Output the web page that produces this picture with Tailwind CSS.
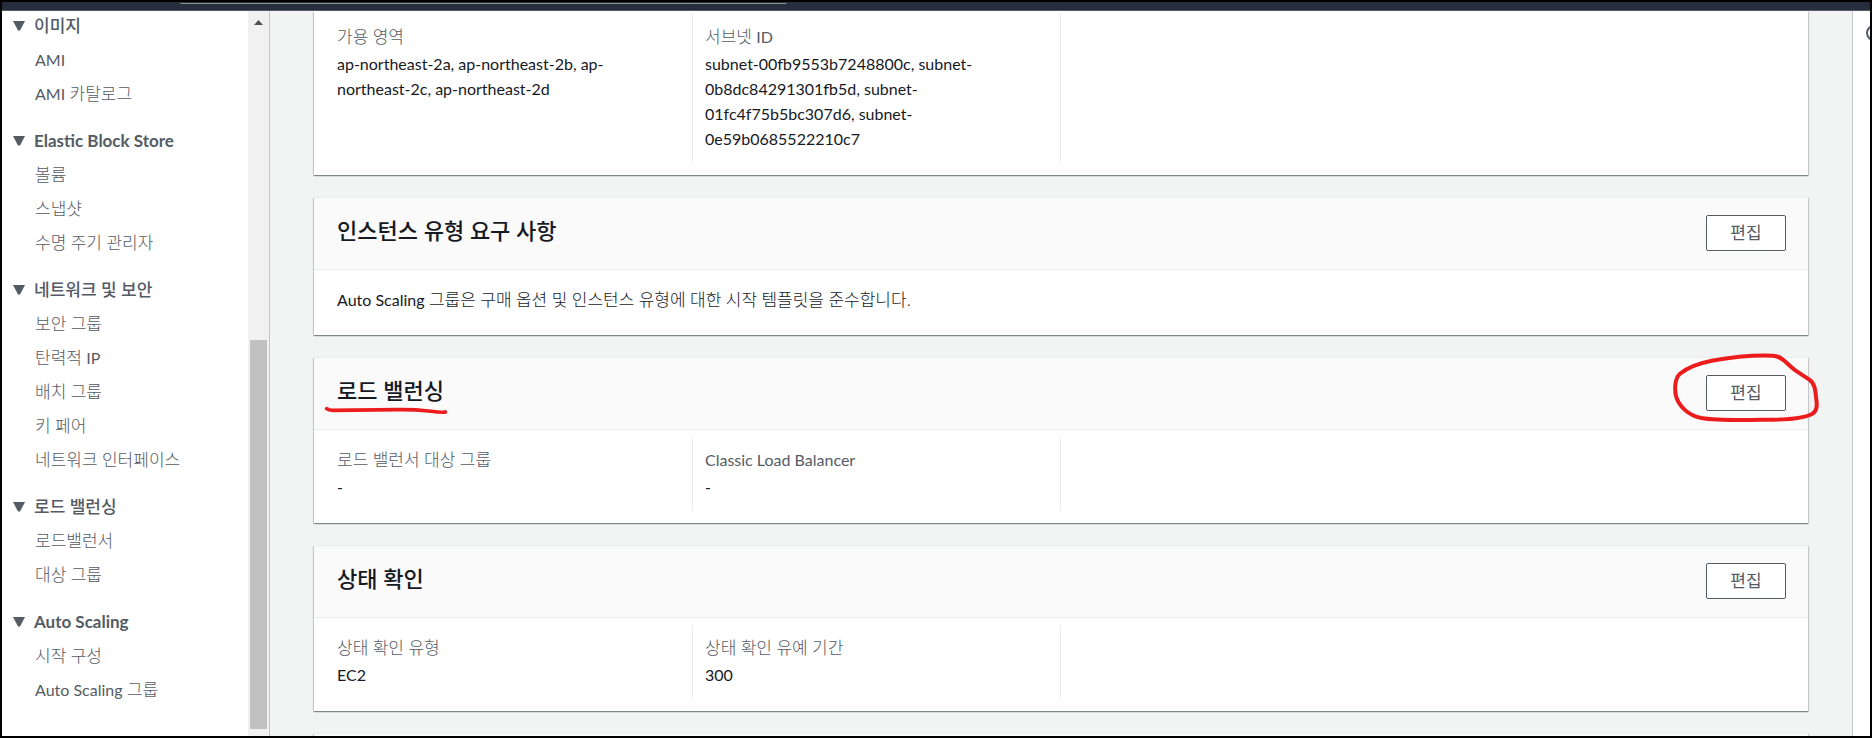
<!DOCTYPE html>
<html lang="ko">
<head>
<meta charset="utf-8">
<meta name="viewport" content="width=device-width, initial-scale=1">
<title>Auto Scaling 그룹</title>
<script src="https://cdn.jsdelivr.net/npm/@tailwindcss/browser@4"></script>
</head>
<body class="h-screen overflow-hidden bg-black p-[2px] font-['Noto_Sans','Noto_Sans_CJK_KR',sans-serif] text-[17px] leading-[25px] font-light text-[#16191f]">
<div class="flex h-full flex-col overflow-hidden">
  <header class="h-[9px] shrink-0 border-b border-[#545b64] bg-[#262e3d] pl-[178px]">
    <div class="h-[2px] w-[607px] rounded-b-[2px] border-b border-[#879596]"></div>
  </header>

  <div class="flex min-h-0 flex-1">
    <!-- Side navigation -->
    <nav class="flex w-[268px] shrink-0 overflow-hidden border-r border-[#c4c4c8] bg-white text-[#545b64]">
      <div class="flex min-w-0 flex-1 flex-col gap-4 pt-px">
        <section>
          <h2 class="mb-[5px] flex h-[26px] items-center pl-[11px] font-medium"><svg class="mr-[9px] h-3 w-3" viewBox="0 -2 12 12" fill="#545b64"><path d="M0 0h12L7 9.500H5z"/></svg>이미지</h2>
          <ul class="pl-[33px] leading-[34px]">
            <li class="h-[34px]"><a href="#" class="font-[Lato,sans-serif] text-[16px] font-normal">AMI</a></li>
            <li class="h-[34px]"><a href="#"><span class="font-[Lato,sans-serif] text-[16px] font-normal">AMI</span> 카탈로그</a></li>
          </ul>
        </section>
        <section>
          <h2 class="mb-[5px] flex h-[26px] items-center pl-[11px] font-[Lato,sans-serif] font-bold"><svg class="mr-[9px] h-3 w-3" viewBox="0 -2 12 12" fill="#545b64"><path d="M0 0h12L7 9.500H5z"/></svg>Elastic Block Store</h2>
          <ul class="pl-[33px] leading-[34px]">
            <li class="h-[34px]"><a href="#">볼륨</a></li>
            <li class="h-[34px]"><a href="#">스냅샷</a></li>
            <li class="h-[34px]"><a href="#">수명 주기 관리자</a></li>
          </ul>
        </section>
        <section>
          <h2 class="mb-[5px] flex h-[26px] items-center pl-[11px] font-medium"><svg class="mr-[9px] h-3 w-3" viewBox="0 -2 12 12" fill="#545b64"><path d="M0 0h12L7 9.500H5z"/></svg>네트워크 및 보안</h2>
          <ul class="pl-[33px] leading-[34px]">
            <li class="h-[34px]"><a href="#">보안 그룹</a></li>
            <li class="h-[34px]"><a href="#">탄력적 <span class="font-[Lato,sans-serif] text-[16px] font-normal">IP</span></a></li>
            <li class="h-[34px]"><a href="#">배치 그룹</a></li>
            <li class="h-[34px]"><a href="#">키 페어</a></li>
            <li class="h-[34px]"><a href="#">네트워크 인터페이스</a></li>
          </ul>
        </section>
        <section>
          <h2 class="mb-[5px] flex h-[26px] items-center pl-[11px] font-medium"><svg class="mr-[9px] h-3 w-3" viewBox="0 -2 12 12" fill="#545b64"><path d="M0 0h12L7 9.500H5z"/></svg>로드 밸런싱</h2>
          <ul class="pl-[33px] leading-[34px]">
            <li class="h-[34px]"><a href="#">로드밸런서</a></li>
            <li class="h-[34px]"><a href="#">대상 그룹</a></li>
          </ul>
        </section>
        <section>
          <h2 class="mb-[5px] flex h-[26px] items-center pl-[11px] font-[Lato,sans-serif] font-bold"><svg class="mr-[9px] h-3 w-3" viewBox="0 -2 12 12" fill="#545b64"><path d="M0 0h12L7 9.500H5z"/></svg>Auto Scaling</h2>
          <ul class="pl-[33px] leading-[34px]">
            <li class="h-[34px]"><a href="#">시작 구성</a></li>
            <li class="h-[34px]"><a href="#"><span class="font-[Lato,sans-serif] text-[16px] font-normal">Auto Scaling</span> 그룹</a></li>
          </ul>
        </section>
      </div>
      <!-- Scrollbar -->
      <div class="flex w-[21px] shrink-0 flex-col bg-[#f1f1f1] pr-[2px] pl-[2px] pt-[9px] pb-[7px]">
        <svg class="ml-1 h-[5px] w-[9px] shrink-0" viewBox="0 0 9 5" fill="#505050"><path d="M0 5 4.500 0 9 5z"/></svg>
        <div class="flex-[315]"></div>
        <div class="flex-[389] bg-[#c1c1c1]"></div>
      </div>
    </nav>

    <!-- Group details -->
    <main class="flex min-w-0 flex-1 flex-col gap-[22px] overflow-hidden bg-[#f2f3f3] pr-11 pl-11">
      <section class="shrink-0 bg-white px-[11px] pt-[3px] pb-3 shadow-[0_1px_1px_0_rgba(0,28,36,0.3),1px_1px_1px_0_rgba(0,28,36,0.15),-1px_1px_1px_0_rgba(0,28,36,0.15)]">
        <dl class="grid grid-cols-4">
          <div class="border-r border-[#eaeded] px-3 pt-[10px] pb-3">
            <dt class="mb-[2px] text-[#545b64]">가용 영역</dt>
            <dd class="max-w-[290px] font-[Lato,sans-serif] text-[16px] font-normal">ap-northeast-2a, ap-northeast-2b, ap-northeast-2c, ap-northeast-2d</dd>
          </div>
          <div class="border-r border-[#eaeded] px-3 pt-[10px] pb-3">
            <dt class="mb-[2px] text-[#545b64]">서브넷 <span class="font-[Lato,sans-serif] text-[16px] font-normal">ID</span></dt>
            <dd class="max-w-[290px] font-[Lato,sans-serif] text-[16px] font-normal">subnet-00fb9553b7248800c, subnet-0b8dc84291301fb5d, subnet-01fc4f75b5bc307d6, subnet-0e59b0685522210c7</dd>
          </div>
        </dl>
      </section>

      <section class="shrink-0 bg-white shadow-[0_1px_1px_0_rgba(0,28,36,0.3),1px_1px_1px_0_rgba(0,28,36,0.15),-1px_1px_1px_0_rgba(0,28,36,0.15)]">
        <div class="flex items-start justify-between border-y border-[#eaeded] bg-[#fafafa] pt-[17px] pr-[22px] pb-[18px] pl-[23px]">
          <h2 class="text-[22px] leading-[30px] font-medium">인스턴스 유형 요구 사항</h2>
          <button type="button" class="h-9 w-20 rounded-[2px] border border-[#545b64] bg-white leading-8 font-normal text-[#545b64]">편집</button>
        </div>
        <p class="px-[23px] pt-[17px] pb-[23px]"><span class="font-[Lato,sans-serif] text-[16px] font-normal">Auto Scaling</span> 그룹은 구매 옵션 및 인스턴스 유형에 대한 시작 템플릿을 준수합니다.</p>
      </section>

      <section class="shrink-0 bg-white shadow-[0_1px_1px_0_rgba(0,28,36,0.3),1px_1px_1px_0_rgba(0,28,36,0.15),-1px_1px_1px_0_rgba(0,28,36,0.15)]">
        <div class="flex items-start justify-between border-y border-[#eaeded] bg-[#fafafa] pt-[17px] pr-[22px] pb-[18px] pl-[23px]">
          <h2 class="relative text-[22px] leading-[30px] font-medium">로드 밸런싱
            <svg class="absolute top-[31px] -left-[14px] h-2 w-[126px]" viewBox="69 198 378 24" fill="none" stroke="#ec1c1c" stroke-width="11" stroke-linecap="round"><path d="M80 206Q86 211 98 211L290 209Q340 208 385 213T436 216"/></svg>
          </h2>
          <div class="relative">
            <button type="button" class="block h-9 w-20 rounded-[2px] border border-[#545b64] bg-white leading-8 font-normal text-[#545b64]">편집</button>
            <svg class="pointer-events-none absolute -top-[25px] -left-[36px] h-[75px] w-[152px] max-w-none" viewBox="90 60 456 225" fill="none" stroke="#ec1c1c" stroke-width="12" stroke-linecap="round" stroke-linejoin="round"><path d="M400 77C340 74 270 82 215 92C175 100 140 114 120 131C103 147 104 180 108 198C116 228 145 257 184 264C235 273 320 270 395 269C445 269 492 264 516 252C534 242 531 222 528 200C526 180 524 160 508 149L466 121C440 102 425 77 400 77Z"/></svg>
          </div>
        </div>
        <dl class="grid grid-cols-4 px-[11px] pt-[7px] pb-3">
          <div class="border-r border-[#eaeded] px-3 pt-[10px] pb-3">
            <dt class="mb-[2px] text-[#545b64]">로드 밸런서 대상 그룹</dt>
            <dd class="font-[Lato,sans-serif] text-[16px] font-normal">-</dd>
          </div>
          <div class="border-r border-[#eaeded] px-3 pt-[10px] pb-3">
            <dt class="mb-[2px] font-[Lato,sans-serif] text-[16px] font-normal text-[#545b64]">Classic Load Balancer</dt>
            <dd class="font-[Lato,sans-serif] text-[16px] font-normal">-</dd>
          </div>
        </dl>
      </section>

      <section class="shrink-0 bg-white shadow-[0_1px_1px_0_rgba(0,28,36,0.3),1px_1px_1px_0_rgba(0,28,36,0.15),-1px_1px_1px_0_rgba(0,28,36,0.15)]">
        <div class="flex items-start justify-between border-y border-[#eaeded] bg-[#fafafa] pt-[17px] pr-[22px] pb-[18px] pl-[23px]">
          <h2 class="text-[22px] leading-[30px] font-medium">상태 확인</h2>
          <button type="button" class="h-9 w-20 rounded-[2px] border border-[#545b64] bg-white leading-8 font-normal text-[#545b64]">편집</button>
        </div>
        <dl class="grid grid-cols-4 px-[11px] pt-[7px] pb-3">
          <div class="border-r border-[#eaeded] px-3 pt-[10px] pb-3">
            <dt class="mb-[2px] text-[#545b64]">상태 확인 유형</dt>
            <dd class="font-[Lato,sans-serif] text-[16px] font-normal">EC2</dd>
          </div>
          <div class="border-r border-[#eaeded] px-3 pt-[10px] pb-3">
            <dt class="mb-[2px] text-[#545b64]">상태 확인 유예 기간</dt>
            <dd class="font-[Lato,sans-serif] text-[16px] font-normal">300</dd>
          </div>
        </dl>
      </section>

      <section class="h-8 shrink-0 border-t border-[#eaeded] bg-[#fafafa] shadow-[0_1px_1px_0_rgba(0,28,36,0.3),1px_1px_1px_0_rgba(0,28,36,0.15),-1px_1px_1px_0_rgba(0,28,36,0.15)]"></section>
    </main>

    <!-- Collapsed info panel -->
    <aside class="w-[18px] shrink-0 overflow-hidden border-l border-[#c4c8c8] bg-white pt-[14px] pl-[13px]">
      <svg class="h-4 w-4 max-w-none" viewBox="0 0 16 16" fill="none" stroke="#545b64" stroke-width="2"><circle cx="8" cy="8" r="7"/><path d="M8 7v5M8 4v2"/></svg>
    </aside>
  </div>
</div>
</body>
</html>
